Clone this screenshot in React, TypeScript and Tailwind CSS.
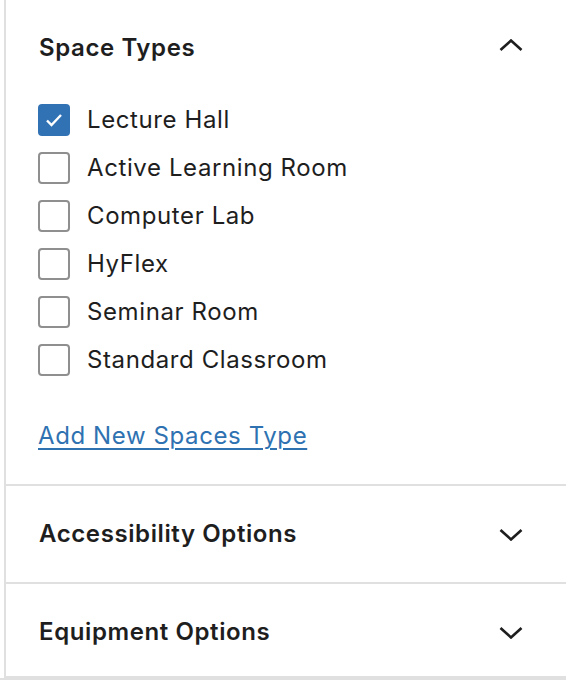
import { useState } from 'react';

type Section = {
  title: string;
  open: boolean;
};

const spaceTypes = [
  'Lecture Hall',
  'Active Learning Room',
  'Computer Lab',
  'HyFlex',
  'Seminar Room',
  'Standard Classroom',
];

const Chevron = ({ up }: { up: boolean }) => (
  <svg width="24" height="12" viewBox="0 0 24 12" fill="none" className={up ? 'mb-[7px] shrink-0' : 'mt-[2px] shrink-0'}>
    {up ? (
      <polyline points="1.5,11 12,1.5 22.5,11" stroke="#1e1e1e" strokeWidth="2.6" />
    ) : (
      <polyline points="1.5,1 12,10.5 22.5,1" stroke="#1e1e1e" strokeWidth="2.6" />
    )}
  </svg>
);

const Checkbox = ({ checked, onToggle }: { checked: boolean; onToggle: () => void }) => (
  <button
    type="button"
    onClick={onToggle}
    className={
      checked
        ? 'flex h-[32px] w-[32px] shrink-0 items-center justify-center rounded-[4px] bg-[#3072b3]'
        : 'flex h-[32px] w-[32px] shrink-0 items-center justify-center rounded-[4px] border-2 border-[#8f8f8f] bg-white'
    }
  >
    {checked && (
      <svg width="18" height="14" viewBox="0 0 18 14" fill="none">
        <polyline points="2,7.5 6.5,12 16,2" stroke="white" strokeWidth="2.4" />
      </svg>
    )}
  </button>
);

const PanelHeader = ({ title, open }: Section) => (
  <div className="flex h-[96px] items-center justify-between pl-[33px] pr-[43px]">
    <h2 className="text-[24px] font-semibold tracking-[0.6px] text-[#1e1e1e]">{title}</h2>
    <Chevron up={open} />
  </div>
);

export default function App() {
  const [checked, setChecked] = useState<Record<string, boolean>>({ 'Lecture Hall': true });

  const toggle = (name: string) => setChecked((prev) => ({ ...prev, [name]: !prev[name] }));

  return (
    <div className="h-[686px] w-[566px] overflow-hidden bg-white font-['Inter','Liberation_Sans',sans-serif]">
      <div className="border-b-2 border-[#e0e0e0] pl-[4px]">
        <div className="h-[678px] overflow-hidden border-b-2 border-l-2 border-[#e0e0e0]">
          <section className="border-b-2 border-[#e0e0e0]">
            <PanelHeader title="Space Types" open />
            <div className="flex flex-col pl-[32px]">
              {spaceTypes.map((name) => (
                <label key={name} className="flex h-[48px] items-center gap-[17px]">
                  <Checkbox checked={!!checked[name]} onToggle={() => toggle(name)} />
                  <span className="text-[24px] tracking-[0.6px] text-[#1e1e1e]">{name}</span>
                </label>
              ))}
            </div>
            <div className="pb-[32px] pl-[32px] pt-[36px]">
              <a
                href="#"
                className="text-[24px] leading-[32px] tracking-[0.6px] text-[#2f72b2] underline decoration-[2px] underline-offset-[4px]"
              >
                Add New Spaces Type
              </a>
            </div>
          </section>
          <section className="border-b-2 border-[#e0e0e0]">
            <PanelHeader title="Accessibility Options" open={false} />
          </section>
          <section>
            <PanelHeader title="Equipment Options" open={false} />
          </section>
        </div>
      </div>
    </div>
  );
}
